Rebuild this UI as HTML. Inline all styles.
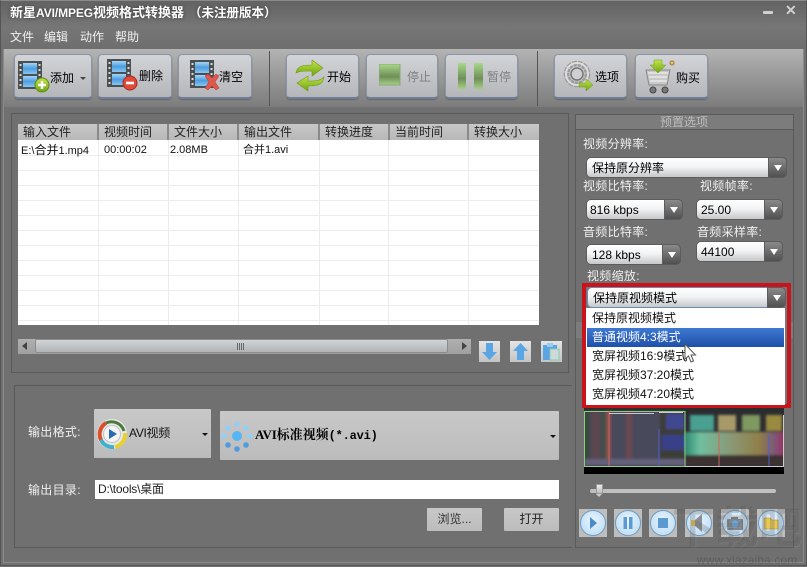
<!DOCTYPE html>
<html><head><meta charset="utf-8"><style>
*{box-sizing:border-box}
html,body{margin:0;padding:0;background:#707070}
body{width:807px;height:566px;position:relative;overflow:hidden;font-family:"Liberation Sans","Noto Sans CJK SC",sans-serif;font-size:12px;color:#000}
.a{position:absolute}
.t{position:absolute;white-space:nowrap;line-height:16px}
.btn{position:absolute;top:54px;height:45px;border-radius:4px;background:linear-gradient(#d2d4d8,#b4b6ba);border:1px solid #8b95a8;border-bottom:2px solid #6e7d98;box-shadow:0 1px 1px #666}
.btn span{position:absolute;font-size:12px;line-height:16px;top:14px;white-space:nowrap}
.btn svg{position:absolute}
.lbl{position:absolute;color:#f0f0f0;font-size:12px;line-height:16px;white-space:nowrap;letter-spacing:.3px}
.cb{position:absolute;border-radius:5px;background:linear-gradient(#fff 0%,#f2f4f6 45%,#c6c8ca 100%);border:1px solid #5c5c5c;font-size:12px;line-height:20px;padding-left:5px;white-space:nowrap}
.cb i{position:absolute;right:-1px;top:-1px;bottom:-1px;width:19px;border-radius:0 5px 5px 0;background:linear-gradient(#8a8a8a,#505050);border:1px solid #5c5c5c}
.cb i:after{content:"";position:absolute;left:5px;top:7px;border-left:4px solid transparent;border-right:4px solid transparent;border-top:6px solid #fff}
.h{position:absolute;top:124px;height:16px;background:linear-gradient(#c8c8c8,#b8b8b8);font-size:12px;line-height:16px;padding-left:5px;color:#222}
.c{position:absolute;top:141px;font-size:11px;line-height:18px;white-space:nowrap;color:#111}
.c b{font-weight:normal;font-size:12px}
.vl{position:absolute;top:140px;width:1px;height:185px;background:#ececec}
.hl{position:absolute;left:18px;width:521px;height:1px;background:#ececec}
.mi{position:absolute;left:1px;width:197px;height:19px;padding-left:5px;font-size:12px;line-height:19px;color:#111;white-space:nowrap}
.pb{position:absolute;top:509px;width:28px;height:28px;background:#bebebe}
.pb b{position:absolute;left:1px;top:1px;width:26px;height:26px;border-radius:50%;background:radial-gradient(circle at 50% 40%,#e8f5ff,#c4e0f6 70%,#f4f8fb 88%);border:1px solid #6f9cc0}
.pb svg{position:absolute;left:0;top:0}
.sb{position:absolute;top:341px;width:21px;height:21px;background:linear-gradient(#e4e4e4,#c4c4c4)}
.fb{position:absolute;background:linear-gradient(#c8c8c8,#bcbcbc);border-radius:1px}
</style></head><body>
<svg width="0" height="0" style="position:absolute"><defs>
<linearGradient id="bl" x1="0" y1="0" x2="0" y2="1"><stop offset="0" stop-color="#a5d4f6"/><stop offset=".5" stop-color="#4b9ee0"/><stop offset="1" stop-color="#8cc6f2"/></linearGradient>
<linearGradient id="gr" x1="0" y1="0" x2="0" y2="1"><stop offset="0" stop-color="#c3e44a"/><stop offset="1" stop-color="#6da512"/></linearGradient>
<symbol id="film" viewBox="0 0 24 28"><rect width="24" height="28" fill="#4a4f52"/><rect x="5" y="2" width="14" height="11" fill="url(#bl)"/><rect x="5" y="15" width="14" height="11" fill="url(#bl)"/><g fill="#d8d8d8"><rect x="1.5" y="3" width="2" height="2"/><rect x="1.5" y="8" width="2" height="2"/><rect x="1.5" y="13" width="2" height="2"/><rect x="1.5" y="18" width="2" height="2"/><rect x="1.5" y="23" width="2" height="2"/><rect x="20.5" y="3" width="2" height="2"/><rect x="20.5" y="8" width="2" height="2"/><rect x="20.5" y="13" width="2" height="2"/><rect x="20.5" y="18" width="2" height="2"/><rect x="20.5" y="23" width="2" height="2"/></g></symbol>
</defs></svg>

<!-- window frame -->
<div class="a" style="left:0;top:0;width:807px;height:49px;background:linear-gradient(#626262,#767676 55%,#6e6e6e)"></div>
<div class="a" style="left:0;top:0;width:807px;height:566px;border:1px solid #555;border-top-color:#8a8a8a;z-index:9;pointer-events:none"></div>
<div class="a" style="left:3px;top:49px;width:1px;height:513px;background:#8a8a8a"></div>
<div class="a" style="left:803px;top:49px;width:1px;height:513px;background:#8a8a8a"></div>
<div class="a" style="left:3px;top:562px;width:801px;height:1px;background:#8a8a8a"></div>
<div class="t" style="left:10px;top:5px;color:#fff;font-size:13px;font-weight:bold;text-shadow:0 0 3px #333">新星<span style="font-size:12px;letter-spacing:-.1px">AVI/MPEG</span>视频格式转换器</div>
<div class="t" style="left:189px;top:5px;color:#fff;font-size:12.500px;font-weight:bold;text-shadow:0 0 3px #333">（未注册版本）</div>
<div class="a" style="left:763px;top:11px;width:10px;height:3px;background:#d0d0d0;border-radius:1px"></div>
<div class="t" style="left:785px;top:2px;color:#d0d0d0;font-size:14px;font-weight:bold">✕</div>
<div class="t" style="left:10px;top:29px;color:#f0f0f0;font-size:12px">文件</div>
<div class="t" style="left:44px;top:29px;color:#f0f0f0;font-size:12px">编辑</div>
<div class="t" style="left:80px;top:29px;color:#f0f0f0;font-size:12px">动作</div>
<div class="t" style="left:115px;top:29px;color:#f0f0f0;font-size:12px">帮助</div>

<!-- toolbar -->
<div class="a" style="left:4px;top:49px;width:799px;height:58px;background:linear-gradient(#b4b4b4,#979797 50%,#7c7c7c)"></div>
<div class="a" style="left:269px;top:51px;width:1px;height:55px;background:#555"></div>
<div class="a" style="left:537px;top:51px;width:1px;height:55px;background:#555"></div>

<div class="btn" style="left:14px;width:78px"><svg style="left:3px;top:6px" width="36" height="36" viewBox="0 0 36 36"><use href="#film" x="0" y="0" width="24" height="28"/><circle cx="24" cy="24" r="7" fill="url(#gr)" stroke="#5d8a10"/><path d="M24 20v8M20 24h8" stroke="#fff" stroke-width="2.4"/></svg><span style="left:35px;top:15px">添加</span><div class="a" style="left:65px;top:22px;border-left:3px solid transparent;border-right:3px solid transparent;border-top:3px solid #444"></div></div>
<div class="btn" style="left:98px;width:74px"><svg style="left:8px;top:4px" width="40" height="36" viewBox="0 0 40 36"><use href="#film" x="0" y="0" width="24" height="28"/><circle cx="23" cy="24" r="7" fill="#e04a3a" stroke="#a52a1e"/><path d="M19 24h8" stroke="#fff" stroke-width="2.6"/></svg><span style="left:40px;top:13px">删除</span></div>
<div class="btn" style="left:178px;width:74px"><svg style="left:11px;top:5px" width="36" height="36" viewBox="0 0 36 36"><use href="#film" x="0" y="0" width="24" height="28"/><path d="M15 16l3-2 4 4 4-4 3 2-4 6 4 6-3 2-4-4-4 4-3-2 4-6z" fill="#e0574c" stroke="#b5372c" stroke-width=".5"/></svg><span style="left:40px;top:14px">清空</span></div>

<div class="btn" style="left:286px;width:73px"><svg style="left:7px;top:4px" width="32" height="34" viewBox="0 0 32 34"><path d="M2 14C3 7 9 6 18 6V1l11 8-11 8v-5c-8 0-12 0-16 2z" fill="url(#gr)" stroke="#6f9a14" stroke-width=".6"/><path d="M30 18c-1 8-7 9-16 9v5L3 24l11-7v5c8 0 12 0 16-4z" fill="url(#gr)" stroke="#6f9a14" stroke-width=".6"/></svg><span style="left:40px">开始</span></div>
<div class="btn" style="left:366px;width:72px"><svg style="left:12px;top:9px" width="22" height="22"><defs><linearGradient id="s1" x1="0" y1="0" x2="0" y2="1"><stop offset="0" stop-color="#a9d888"/><stop offset=".6" stop-color="#6f8f58"/><stop offset="1" stop-color="#a5cf85"/></linearGradient></defs><rect width="21" height="21" fill="url(#s1)" stroke="#8aa878"/></svg><span style="left:40px;color:#808080;top:14px">停止</span></div>
<div class="btn" style="left:445px;width:73px"><svg style="left:12px;top:8px" width="26" height="26"><rect x="0" y="0" width="8" height="26" fill="url(#s1)"/><rect x="16" y="0" width="9" height="26" fill="url(#s1)"/></svg><span style="left:41px;color:#808080;top:14px">暂停</span></div>

<div class="btn" style="left:554px;width:73px"><svg style="left:7px;top:4px" width="34" height="36" viewBox="0 0 34 36"><circle cx="15" cy="15" r="10.500" fill="none" stroke="#9a9a9a" stroke-width="5.500" stroke-dasharray="4 1"/><circle cx="15" cy="15" r="11" fill="none" stroke="#ddd" stroke-width="2"/><circle cx="15" cy="15" r="6" fill="#d0d0d0" stroke="#777" stroke-width="1.500"/><path d="M17 24h7v-4l7 6-7 6v-4h-7z" fill="url(#gr)" stroke="#6f9a14" stroke-width=".5"/></svg><span style="left:40px;top:14px">选项</span></div>
<div class="btn" style="left:635px;width:73px"><svg style="left:8px;top:4px" width="34" height="36" viewBox="0 0 34 36"><path d="M2 11l3 15h18l3-15z" fill="#c8c8c8" stroke="#888"/><path d="M4 14h20M5 18h18M6 22h17" stroke="#eee" stroke-width="1.200"/><circle cx="9" cy="31" r="3" fill="#777" stroke="#444"/><circle cx="21" cy="31" r="3" fill="#777" stroke="#444"/><path d="M10 1h8v5h4l-8 8-8-8h4z" fill="url(#gr)" stroke="#6f9a14" stroke-width=".5"/><circle cx="28" cy="4" r="2" fill="#e8c070" stroke="#a07830"/></svg><span style="left:40px;top:15px">购买</span></div>

<!-- left panel -->
<div class="a" style="left:11px;top:113px;width:558px;height:260px;border:1px solid #5a5a5a"></div>
<div class="a" style="left:18px;top:124px;width:521px;height:201px;background:#fff"></div>
<div class="a" style="left:18px;top:124px;width:521px;height:16px;background:#8a8a8a"></div>
<div class="h" style="left:18px;width:79px">输入文件</div>
<div class="h" style="left:99px;width:68px">视频时间</div>
<div class="h" style="left:169px;width:68px">文件大小</div>
<div class="h" style="left:239px;width:79px">输出文件</div>
<div class="h" style="left:320px;width:68px">转换进度</div>
<div class="h" style="left:390px;width:77px">当前时间</div>
<div class="h" style="left:469px;width:70px">转换大小</div>
<div class="vl" style="left:98px"></div><div class="vl" style="left:168px"></div><div class="vl" style="left:238px"></div><div class="vl" style="left:319px"></div><div class="vl" style="left:388px"></div><div class="vl" style="left:468px"></div>
<div class="hl" style="top:155px"></div><div class="hl" style="top:170px"></div><div class="hl" style="top:185px"></div><div class="hl" style="top:200px"></div><div class="hl" style="top:215px"></div><div class="hl" style="top:230px"></div><div class="hl" style="top:245px"></div><div class="hl" style="top:260px"></div><div class="hl" style="top:275px"></div><div class="hl" style="top:290px"></div><div class="hl" style="top:305px"></div><div class="hl" style="top:320px"></div>
<div class="c" style="left:21px">E:\<b>合并</b>1.mp4</div>
<div class="c" style="left:104px">00:00:02</div>
<div class="c" style="left:170px">2.08MB</div>
<div class="c" style="left:243px">合并1.avi</div>

<!-- scrollbar -->
<div class="a" style="left:18px;top:339px;width:453px;height:15px;background:linear-gradient(#b0b0b0,#a0a0a0)"></div>
<div class="a" style="left:35px;top:339px;width:413px;height:14px;background:linear-gradient(#d0d4d6,#b0b4b6);border:1px solid #8c8c8c;border-radius:2px"></div>
<div class="a" style="left:237px;top:343px;width:7px;height:7px;background:repeating-linear-gradient(90deg,#666 0 1px,transparent 1px 2px)"></div>
<div class="a" style="left:22px;top:342px;border-top:4.500px solid transparent;border-bottom:4.500px solid transparent;border-right:5px solid #444"></div>
<div class="a" style="left:462px;top:342px;border-top:4.500px solid transparent;border-bottom:4.500px solid transparent;border-left:5px solid #444"></div>
<div class="sb" style="left:479px"><svg width="21" height="21"><path d="M7 2h7v9h4l-7.500 8L3 11h4z" fill="#5aa5e4"/></svg></div>
<div class="sb" style="left:510px"><svg width="21" height="21"><path d="M7 19h7v-9h4L10.500 2 3 10h4z" fill="#5aa5e4"/></svg></div>
<div class="sb" style="left:541px"><svg width="21" height="21"><rect x="2" y="4" width="14" height="15" fill="#5aa5e4"/><rect x="6" y="2" width="6" height="4" fill="#9ccbf0"/><rect x="9" y="8" width="9" height="11" fill="#d0d8dc" stroke="#8ca"/></svg></div>

<!-- output panel -->
<div class="a" style="left:14px;top:385px;width:558px;height:163px;border:1px solid #5a5a5a;border-right:0"></div>
<div class="lbl" style="left:28px;top:424px">输出格式:</div>
<div class="lbl" style="left:28px;top:482px">输出目录:</div>
<div class="fb" style="left:94px;top:409px;width:117px;height:49px">
<svg class="a" style="left:3px;top:10px" width="30" height="30" viewBox="0 0 30 30"><circle cx="15" cy="15" r="12" fill="none" stroke="#e8e8e8" stroke-width="6"/><path d="M4 21A13 13 0 0 1 9 4" fill="none" stroke="#d9502e" stroke-width="4"/><path d="M9 4A13 13 0 0 1 27 12" fill="none" stroke="#4a7a3a" stroke-width="3"/><path d="M28 14A13 13 0 0 1 18 28" fill="none" stroke="#e8d030" stroke-width="4"/><path d="M17 28A13 13 0 0 1 4 21" fill="none" stroke="#3fb0d0" stroke-width="4"/><circle cx="15" cy="15" r="8" fill="#f4f4f4"/><path d="M12 10l8 5-8 5z" fill="#2a6ab0"/></svg>
<div class="t" style="left:35px;top:16px;font-size:12px;letter-spacing:-.3px;color:#111">AVI视频</div>
<div class="a" style="left:108px;top:24px;border-left:3px solid transparent;border-right:3px solid transparent;border-top:3px solid #111"></div></div>
<div class="fb" style="left:220px;top:411px;width:339px;height:49px">
<svg class="a" style="left:0;top:7px" width="34" height="36" viewBox="0 0 34 36"><circle cx="17" cy="18" r="5" fill="#55b5f5"/><g fill="#8fd0f8"><circle cx="17" cy="6" r="2.600"/><circle cx="8" cy="10" r="2.600"/><circle cx="26" cy="10" r="2.600"/><circle cx="4" cy="18" r="2.600"/><circle cx="30" cy="18" r="2.600"/></g><g fill="#4d9be0"><circle cx="8" cy="27" r="2.800"/><circle cx="26" cy="27" r="2.800"/><circle cx="17" cy="31" r="2.800"/></g></svg>
<div class="t" style="left:35px;top:16px;font-family:'Liberation Serif','Noto Serif CJK SC',serif;font-weight:bold;font-size:13px"><span style="letter-spacing:-.2px">AVI</span>标准视频<span style="font-family:'Liberation Mono',monospace;font-size:12px;letter-spacing:-.2px">(*.avi)</span></div>
<div class="a" style="left:330px;top:24px;border-left:3px solid transparent;border-right:3px solid transparent;border-top:3px solid #111"></div></div>
<div class="a" style="left:95px;top:480px;width:464px;height:19px;background:#fff;font-size:12px;line-height:19px;padding-left:3px;letter-spacing:-.2px;color:#222">D:\tools\桌面</div>
<div class="fb" style="left:427px;top:508px;width:55px;height:23px;text-align:center;line-height:23px;color:#333;font-size:12px">浏览...</div>
<div class="fb" style="left:504px;top:508px;width:55px;height:23px;text-align:center;line-height:23px;color:#222;font-size:12px">打开</div>

<!-- right panel -->
<div class="a" style="left:575px;top:114px;width:219px;height:434px;border:1px solid #5a5a5a"></div>
<div class="a" style="left:576px;top:115px;width:217px;height:15px;background:#7c7c7c;border-bottom:1px solid #5a5a5a"></div>
<div class="t" style="left:660px;top:114px;color:#bdbdbd">预置选项</div>
<div class="lbl" style="left:583px;top:136px">视频分辨率:</div>
<div class="cb" style="left:586px;top:157px;width:201px;height:21px">保持原分辨率<i></i></div>
<div class="lbl" style="left:583px;top:178px">视频比特率:</div>
<div class="lbl" style="left:700px;top:178px">视频帧率:</div>
<div class="cb" style="left:586px;top:199px;width:97px;height:21px;padding-left:3px">816 kbps<i></i></div>
<div class="cb" style="left:696px;top:199px;width:87px;height:21px;padding-left:4px">25.00<i></i></div>
<div class="lbl" style="left:583px;top:224px">音频比特率:</div>
<div class="lbl" style="left:697px;top:224px">音频采样率:</div>
<div class="cb" style="left:586px;top:244px;width:95px;height:21px">128 kbps<i></i></div>
<div class="cb" style="left:696px;top:241px;width:87px;height:21px;padding-left:4px">44100<i></i></div>
<div class="lbl" style="left:587px;top:268px">视频缩放:</div>

<div class="a" style="left:576px;top:322px;width:217px;height:16px;background:#7c7c7c"></div>
<div class="a" style="left:584px;top:348px;width:200px;height:8px;background:#000"></div>

<!-- video -->
<svg class="a" style="left:584px;top:405px" width="200" height="69" viewBox="0 0 200 69">
<defs><filter id="bb"><feGaussianBlur stdDeviation="1.200"/></filter>
<linearGradient id="v2" x1="0" y1="0" x2="1" y2="0"><stop offset="0" stop-color="#2f8a70"/><stop offset=".15" stop-color="#6fc0a0"/><stop offset=".45" stop-color="#8a9a78"/><stop offset=".75" stop-color="#907f48"/><stop offset=".9" stop-color="#7a5a78"/><stop offset="1" stop-color="#a03060"/></linearGradient></defs>
<rect width="200" height="69" fill="#2c2c30"/>
<g filter="url(#bb)">
<rect x="0" y="6" width="101" height="55" fill="#4a4a5c"/>
<rect x="0" y="6" width="6" height="55" fill="#3a4a3e"/>
<rect x="8" y="6" width="8" height="55" fill="#5c4650"/>
<rect x="17" y="6" width="5" height="55" fill="#3f5048"/>
<rect x="22" y="6" width="5" height="55" fill="#8a5050"/>
<rect x="42" y="6" width="6" height="55" fill="#6a4a50"/>
<rect x="76" y="6" width="25" height="55" fill="#3e3e38"/>
<rect x="82" y="9" width="18" height="15" fill="#404a90"/>
<rect x="78" y="30" width="23" height="15" fill="#38408a"/>
<rect x="0" y="54" width="101" height="7" fill="#64607a"/>
<rect x="106" y="10" width="24" height="16" fill="#48a090"/><rect x="134" y="10" width="18" height="16" fill="#a89a68"/><rect x="158" y="10" width="18" height="16" fill="#7f9a60"/><rect x="182" y="10" width="16" height="16" fill="#9a8a40"/>
<rect x="101" y="27" width="99" height="23" fill="url(#v2)"/><rect x="101" y="50" width="99" height="11" fill="#3c3030"/>
</g>
<path d="M.5 6.500V61.500H101V6.500H0" fill="none" stroke="#8ad080"/><path d="M25 6V61M135 27V61" stroke="#c86860"/><path d="M75 24V61M185 30V61" stroke="#5060c8"/><path d="M101 61.500H199.500V10" fill="none" stroke="#ccc"/>
<path d="M25 8.500h45M75 7.500h24" stroke="#ccc"/>
<rect x="0" y="62" width="200" height="7" fill="#000"/>
</svg>
<!-- red box + dropdown -->
<div class="a" style="left:582px;top:283px;width:209px;height:125px;background:#777;border:4px solid #c8141a"></div>
<div class="cb" style="left:587px;top:287px;width:199px;height:21px;border-color:#6c8cb4;font-size:12px">保持原视频模式<i></i></div>
<div class="a" style="left:586px;top:308px;width:199px;height:97px;background:#fff">
<div class="mi" style="top:1px">保持原视频模式</div>
<div class="mi" style="top:20px;background:linear-gradient(#3c78d2,#2050a8);color:#fff">普通视频4:3模式</div>
<div class="mi" style="top:39px">宽屏视频16:9模式</div>
<div class="mi" style="top:58px">宽屏视频37:20模式</div>
<div class="mi" style="top:77px">宽屏视频47:20模式</div>
</div>
<svg class="a" style="left:684px;top:343px" width="14" height="20" viewBox="0 0 14 20"><path d="M1 1v15l3.500-3 2.500 6 2.500-1-2.500-6h4.500z" fill="#fff" stroke="#555"/></svg>

<!-- slider -->
<div class="a" style="left:590px;top:489px;width:186px;height:4px;background:#c0c0c0;border-radius:2px"></div>
<div class="a" style="left:596px;top:484px;width:7px;height:10px;background:linear-gradient(#eee,#bbb);border:1px solid #999"></div>
<div class="a" style="left:596px;top:494px;border-left:3.500px solid transparent;border-right:3.500px solid transparent;border-top:3px solid #ccc"></div>

<!-- playback -->
<div class="pb" style="left:579px"><b></b><svg width="28" height="28"><path d="M11 8l7 6-7 6z" fill="#4a8cc6"/></svg></div>
<div class="pb" style="left:614px"><b></b><svg width="28" height="28"><rect x="9.500" y="8" width="3.500" height="12" fill="#5a9ad0"/><rect x="15" y="8" width="3.500" height="12" fill="#5a9ad0"/></svg></div>
<div class="pb" style="left:649px"><b></b><svg width="28" height="28"><rect x="9" y="9" width="10" height="10" fill="#5a9ad0"/></svg></div>
<div class="pb" style="left:685px"><b></b><svg width="28" height="28"><path d="M6 11h4l7-6v18l-7-6H6z" fill="#8a8f96"/><rect x="6" y="11" width="4" height="6" fill="#e0c050"/></svg></div>
<div class="pb" style="left:721px"><b></b><svg width="28" height="28"><rect x="6" y="10" width="16" height="11" rx="1" fill="#80868c"/><rect x="10" y="8" width="7" height="3" fill="#80868c"/><circle cx="14" cy="15" r="3.500" fill="#6aa8e0"/></svg></div>
<div class="pb" style="left:757px"><b></b><svg width="28" height="28"><path d="M7 9h6l2 2h6v9H7z" fill="#e8c850" stroke="#a88a30" stroke-width=".6"/></svg></div>

<!-- watermark -->
<div class="t" style="left:672px;top:503px;font-size:43px;line-height:52px;color:rgba(60,60,60,.2);font-weight:bold;letter-spacing:.5px;text-shadow:1px 1px 0 rgba(255,255,255,.06)">下载吧</div>
<div class="t" style="left:697px;top:554px;font-size:12px;line-height:13px;color:rgba(50,50,50,.3);letter-spacing:.1px">www.xiazaiba.com</div>
</body></html>
